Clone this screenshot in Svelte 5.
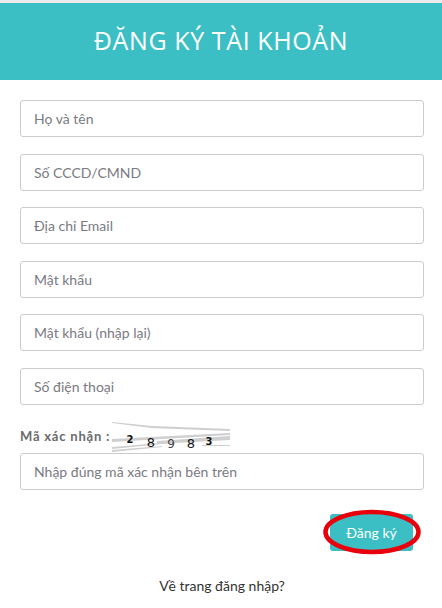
<script lang="ts">
  const fields = [
    'Họ và tên',
    'Số CCCD/CMND',
    'Địa chỉ Email',
    'Mật khẩu',
    'Mật khẩu (nhập lại)',
    'Số điện thoại'
  ];
</script>

<div class="page">
  <header class="banner">
    <h1>ĐĂNG KÝ TÀI KHOẢN</h1>
  </header>

  <form class="form" on:submit|preventDefault>
    {#each fields as f}
      <input class="field" type="text" placeholder={f} />
    {/each}

    <div class="captcha-row">
      <span class="captcha-label">Mã xác nhận :</span>
      <svg class="captcha" width="120" height="31" viewBox="0 0 120 31">
        <g fill="#cfcfcf">
          <polygon points="0,0 40,4 118,7 118,9 40,6 0,1" />
          <polygon points="0,17 118,11 118,13 0,20" />
          <polygon points="45,19 118,14 118,18 45,22" />
          <polygon points="0,25 60,20 60,21 0,27" />
          <polygon points="0,28 50,24 50,25 0,30" />
          <polygon points="90,23 118,23 118,24 90,24" />
        </g>
        <g font-family="'DejaVu Sans', sans-serif" fill="#111" text-anchor="middle">
          <text x="18" y="21" font-size="10" font-weight="700">2</text>
          <text x="39" y="25" font-size="13">8</text>
          <text x="59" y="26" font-size="12" fill="#444">9</text>
          <text x="79" y="26" font-size="13">8</text>
          <text x="97" y="23" font-size="10" font-weight="700">3</text>
        </g>
      </svg>
    </div>

    <input class="field" type="text" placeholder="Nhập đúng mã xác nhận bên trên" />

    <div class="actions">
      <button class="submit" type="submit">Đăng ký</button>
      <svg class="circle" width="100" height="46" viewBox="0 0 100 46">
        <ellipse cx="50" cy="23" rx="46.5" ry="20" fill="none" stroke="#e8000b" stroke-width="4.5" />
      </svg>
    </div>

    <a class="login" href="#login">Về trang đăng nhập?</a>
  </form>
</div>

<style>
  :global(body) {
    margin: 0;
    background: #fff;
    font-family: Lato, "Liberation Sans", sans-serif;
  }

  .page {
    width: 442px;
    height: 608px;
    overflow: hidden;
    background: #fff;
    border-top: 3px solid #ececec;
    box-sizing: border-box;
  }

  .banner {
    height: 77px;
    padding-bottom: 4px;
    box-sizing: border-box;
    background: #3bbfc4;
    display: flex;
    align-items: center;
    justify-content: center;
  }

  h1 {
    margin: 0;
    color: #fff;
    font-family: "Open Sans", sans-serif;
    font-size: 25px;
    font-weight: 500;
    letter-spacing: 0.6px;
  }

  .form {
    padding: 20px 18px 0 20px;
    display: flex;
    flex-direction: column;
  }

  .field {
    height: 37px;
    box-sizing: border-box;
    margin-bottom: 16.6px;
    padding: 0 13px;
    border: 1px solid #cccccc;
    border-radius: 3px;
    background: #fff;
    font-family: Lato, sans-serif;
    font-size: 14px;
    color: #555;
    outline: none;
  }

  .field::placeholder {
    color: #7a7a82;
    opacity: 1;
  }

  .field:last-of-type {
    margin-bottom: 0;
  }

  .captcha-row {
    display: flex;
    align-items: flex-start;
    height: 31px;
  }

  .captcha-label {
    font-size: 13px;
    font-weight: 700;
    color: #6b6b6b;
    margin-top: 6px;
    letter-spacing: 0.8px;
  }

  .captcha {
    margin-left: 2px;
  }

  .actions {
    position: relative;
    align-self: flex-end;
    margin-top: 24px;
    margin-right: 11px;
  }

  .submit {
    display: block;
    width: 83px;
    height: 37px;
    border: none;
    border-radius: 3px;
    background: #3bbfc4;
    color: #fff;
    font-family: Lato, sans-serif;
    font-size: 14px;
    cursor: pointer;
  }

  .circle {
    position: absolute;
    left: -8.5px;
    top: -5px;
    pointer-events: none;
  }

  .login {
    align-self: center;
    margin-top: 26px;
    color: #333;
    font-size: 14px;
    text-decoration: none;
  }
</style>
